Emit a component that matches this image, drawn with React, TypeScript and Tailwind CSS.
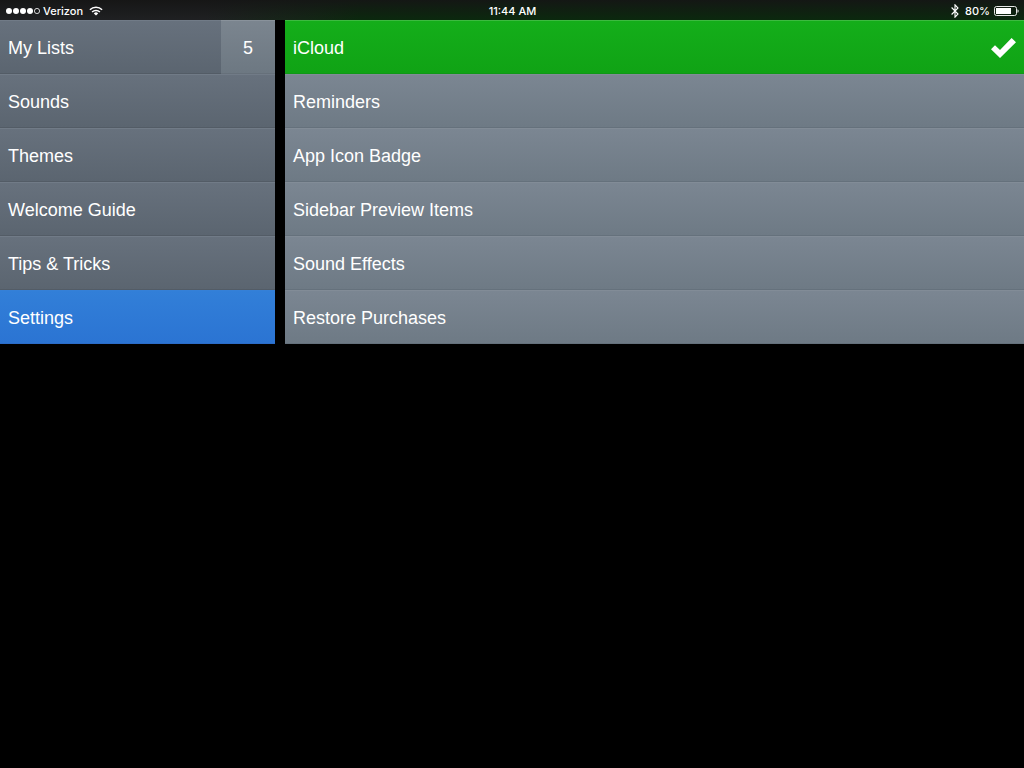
import clsx from "clsx";

const menu = [
  { label: "My Lists", count: 5 },
  { label: "Sounds" },
  { label: "Themes" },
  { label: "Welcome Guide" },
  { label: "Tips & Tricks" },
  { label: "Settings", active: true },
];

const settings = [
  { label: "iCloud", on: true },
  { label: "Reminders" },
  { label: "App Icon Badge" },
  { label: "Sidebar Preview Items" },
  { label: "Sound Effects" },
  { label: "Restore Purchases" },
];

const row = "flex h-[54px] w-full items-center border-y text-left text-[18px] leading-6";

function Signal() {
  return (
    <svg width="35" height="8" viewBox="0 0 35 8" fill="white" aria-hidden="true">
      <circle cx="3" cy="4" r="3" />
      <circle cx="10" cy="4" r="3" />
      <circle cx="17" cy="4" r="3" />
      <circle cx="24" cy="4" r="3" />
      <circle cx="31" cy="4" r="2.6" fill="none" stroke="white" strokeWidth="0.8" />
    </svg>
  );
}

function Wifi() {
  return (
    <svg width="14" height="10" viewBox="0 0 14 10" fill="none" stroke="white" strokeWidth="1.5" aria-hidden="true">
      <path d="M0.9 3.8a8.6 8.6 0 0 1 12.2 0" />
      <path d="M3.1 6a5.5 5.5 0 0 1 7.8 0" />
      <path d="M7 9.6 4.8 7.4a3.1 3.1 0 0 1 4.4 0z" fill="white" stroke="none" />
    </svg>
  );
}

function Bluetooth() {
  return (
    <svg width="8" height="14" viewBox="0 0 8 14" fill="none" stroke="white" strokeWidth="1.1" aria-hidden="true">
      <path d="M0.6 3.5 7 10 4 13.2V0.8L7 4 0.6 10.5" />
    </svg>
  );
}

function Battery() {
  return (
    <svg width="25" height="10" viewBox="0 0 25 10" aria-hidden="true">
      <rect x="0.5" y="0.5" width="22" height="9" rx="2" fill="none" stroke="white" strokeWidth="0.9" />
      <rect x="2" y="2" width="15" height="6" fill="white" />
      <path d="M23.5 3.2c1.5.5 1.5 3.1 0 3.6z" fill="white" />
    </svg>
  );
}

function StatusBar() {
  return (
    <header className="h-5 bg-gradient-to-r from-[#1f2022] from-20% to-[#0b290e] to-35% font-['Inter',sans-serif] text-[11px] leading-5 font-medium">
      <div className="grid h-5 grid-cols-3 bg-gradient-to-b from-[#151515]/90 to-[#151515]/0 pt-px pr-[5px] pl-1.5">
        <div className="flex h-5 items-center gap-0.5">
          <Signal />
          <span className="mr-1">Verizon</span>
          <Wifi />
        </div>
        <time className="text-center">11:44 AM</time>
        <div className="flex h-5 items-center justify-end gap-1">
          <Bluetooth />
          <span className="ml-0.5">80%</span>
          <Battery />
        </div>
      </div>
    </header>
  );
}

export default function App() {
  return (
    <div className="min-h-screen bg-black font-['Liberation_Sans',Arial,sans-serif] text-white">
      <StatusBar />
      <div className="flex items-start gap-2.5">
        <nav className="w-[275px] shrink-0">
          {menu.map((m) => (
            <button
              key={m.label}
              aria-current={m.active ? "page" : undefined}
              className={clsx(
                row,
                m.active
                  ? "border-t-[#3580d7] border-b-[#2b6cc8] bg-gradient-to-b from-[#327fd8] to-[#2b74d3]"
                  : "border-t-[#717b87] border-b-[#535c66] bg-gradient-to-b from-[#67717d] to-[#5b6570]"
              )}
            >
              <span className="flex-1 pt-0.5 pl-2">{m.label}</span>
              {m.count && (
                <span className="-my-px flex h-[54px] w-[54px] items-center justify-center border-y border-t-[#89929b] border-b-[#66707a] bg-gradient-to-b from-[#7b858f] to-[#6d7882] pt-0.5">
                  {m.count}
                </span>
              )}
            </button>
          ))}
        </nav>
        <main className="min-w-0 flex-1">
          {settings.map((s) => (
            <button
              key={s.label}
              className={clsx(
                row,
                "justify-between px-2 pt-0.5",
                s.on
                  ? "border-t-[#3cba40] border-b-[#109817] bg-gradient-to-b from-[#14ae1a] to-[#10a315]"
                  : "border-t-[#828c97] border-b-[#65717c] bg-gradient-to-b from-[#7b8692] to-[#6e7a85]"
              )}
            >
              <span>{s.label}</span>
              {s.on && (
                <svg width="25" height="20" viewBox="0 0 25 20" fill="white" aria-hidden="true">
                  <path d="M0 11.3 4 7.2l5 4.7L20.6 0 25 4.2 9 20z" />
                </svg>
              )}
            </button>
          ))}
        </main>
      </div>
    </div>
  );
}
